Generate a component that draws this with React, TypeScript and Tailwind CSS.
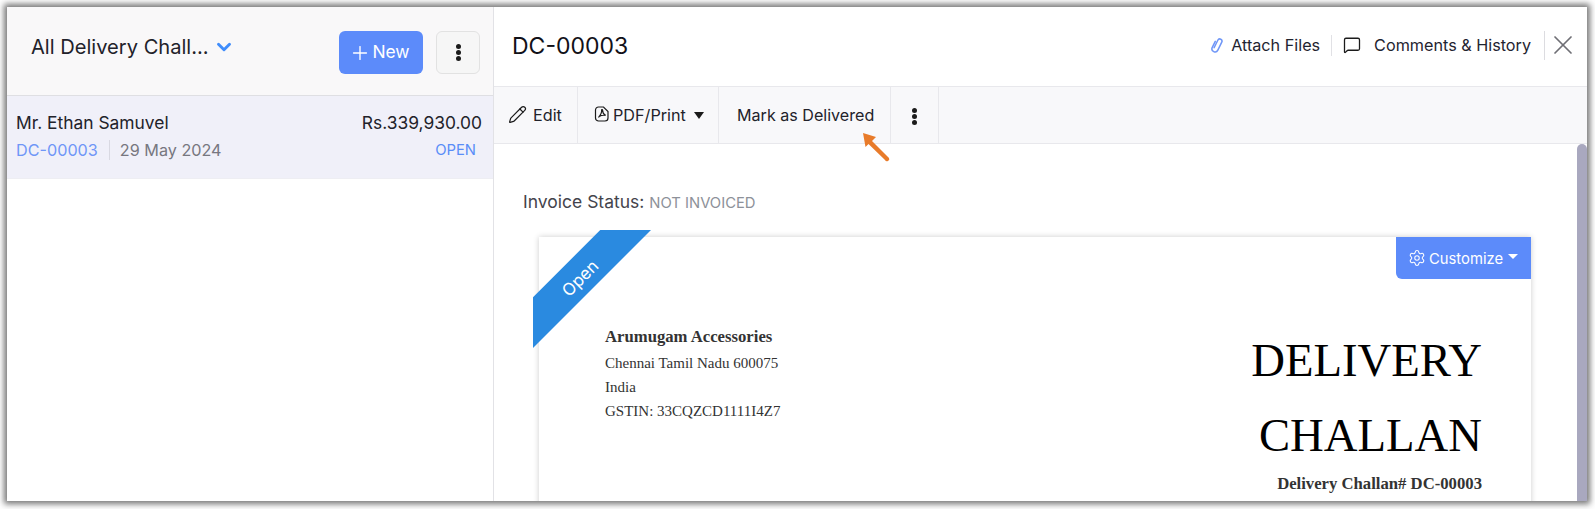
import { Pencil, MessageSquare, X, Settings, Plus, ChevronDown } from 'lucide-react';

function Kebab() {
  return (
    <div className="flex flex-col gap-[1px]">
      <span className="w-[5px] h-[5px] rounded-full bg-[#1b1b1b]" />
      <span className="w-[5px] h-[5px] rounded-full bg-[#1b1b1b]" />
      <span className="w-[5px] h-[5px] rounded-full bg-[#1b1b1b]" />
    </div>
  );
}

function Sidebar() {
  return (
    <aside className="w-[487px] shrink-0 border-r border-[#e2e2e6] flex flex-col">
      <div className="h-[89px] bg-[#f9f8f9] border-b border-[#dfdfe3] flex items-start pt-[24px] pl-[24px] pr-[13px]">
        <div className="flex items-center h-[32px] text-[20.1px] text-[#22222a]">
          <span>All Delivery Chall...</span>
          <ChevronDown className="w-[22px] h-[22px] ml-[4px] text-[#408dfb]" strokeWidth={3.2} />
        </div>
        <button className="ml-auto w-[84px] h-[43px] rounded-[6px] bg-[#5c8bfa] text-white text-[17.4px] flex items-center justify-center gap-[1px] pr-[3px]">
          <Plus className="w-[22px] h-[22px]" strokeWidth={1.5} />
          New
        </button>
        <button className="ml-[13px] w-[44px] h-[43px] rounded-[6px] bg-[#f6f6f6] border border-[#e2e2e2] flex items-center justify-center">
          <Kebab />
        </button>
      </div>
      <div className="h-[83px] bg-[#f0f0f9] border-b border-[#eeeef3] pl-[9px] pr-[11px] pt-[14px]">
        <div className="flex justify-between text-[17.4px] leading-[26px] text-[#22222a]">
          <span>Mr. Ethan Samuvel</span>
          <span>Rs.339,930.00</span>
        </div>
        <div className="flex items-center text-[16.2px] leading-[20px] mt-[4px]">
          <span className="text-[#6f96f7]">DC-00003</span>
          <span className="w-px h-[20px] bg-[#d9d9e2] ml-[11px] mr-[10px]" />
          <span className="text-[#777780]">29 May 2024</span>
          <span className="ml-auto mr-[6px] text-[#5a8df8] text-[14.8px]">OPEN</span>
        </div>
      </div>
    </aside>
  );
}

function TitleBar() {
  return (
    <div className="h-[79px] flex items-start pl-[18px] pr-[8px] pt-[22px]">
      <h1 className="text-[23px] leading-[34px] text-[#111118]">DC-00003</h1>
      <div className="ml-auto flex items-center h-[32px] text-[16.2px] text-[#1f2430]">
        <svg viewBox="0 0 14 17" className="w-[14px] h-[17px] mr-[7px]" fill="none" stroke="#6f96f7" strokeWidth="1.5" strokeLinecap="round">
          <g transform="rotate(26 7 8.5)">
            <path d="M3.6 5.5v6.8a3.1 3.1 0 0 0 6.2 0V3.4a2.2 2.2 0 0 0-4.4 0v8.4" />
          </g>
        </svg>
        <span>Attach Files</span>
        <span className="w-px h-[21px] bg-[#e1e1e5] mx-[11px]" />
        <MessageSquare className="w-[18px] h-[18px] text-[#1b1b1b] mr-[13px]" strokeWidth={1.7} />
        <span>Comments &amp; History</span>
        <span className="w-px h-[29px] bg-[#dcdce0] ml-[13px] mr-[2px]" />
        <X className="w-[32px] h-[32px] text-[#6f6f75]" strokeWidth={1.3} />
      </div>
    </div>
  );
}

function Toolbar() {
  return (
    <div className="relative h-[58px] bg-[#f8f8fa] border-y border-[#e8e8ec] flex text-[16.2px] text-[#22222a]">
      <div className="w-[84px] border-r border-[#e8e8ec] flex items-center pl-[14px] pt-[1px]">
        <Pencil className="w-[19px] h-[19px] text-[#1b1b1b] mr-[6px] -mt-[2px]" strokeWidth={1.5} />
        <span>Edit</span>
      </div>
      <div className="w-[141px] border-r border-[#e8e8ec] flex items-center pl-[16px] pt-[1px]">
        <svg viewBox="0 0 16 16" className="w-[16px] h-[16px] mr-[3px] -mt-[4px]" fill="none" stroke="#1b1b1b" strokeWidth="1.2">
          <path d="M4.5 1h5L14 5.5V12a3 3 0 0 1-3 3H4.5a3 3 0 0 1-3-3V4a3 3 0 0 1 3-3z" />
          <path d="M4.5 11.5C6.5 9 8 6 7.6 4.2c-.2-.8 1-.8 1 0 0 2 1.5 4.4 3 5.2-2-.3-4.5 0-6.4 1z" />
        </svg>
        <span>PDF/Print</span>
        <span className="ml-[8px] w-0 h-0 border-x-[5px] border-x-transparent border-t-[7px] border-t-[#1b1b1b]" />
      </div>
      <div className="w-[172px] border-r border-[#e8e8ec] flex items-center pl-[18px] pt-[1px] text-[16.1px]">Mark as Delivered</div>
      <div className="w-[48px] border-r border-[#e8e8ec] flex items-center justify-center pt-[2px]">
        <Kebab />
      </div>
      <svg viewBox="0 0 30 32" className="absolute left-[367px] top-[44px] w-[30px] h-[32px]" fill="#e87b2a">
        <path d="M2 2 L15 6 L11 10 L28 27 Q29 29 27 30 Q25 31 24 29 L7.5 13 L4.5 16 Z" />
      </svg>
    </div>
  );
}

function Paper() {
  return (
    <div className="relative ml-[16px] mt-[22px] w-[992px] h-[400px] bg-white shadow-[0_0_6px_rgba(0,0,0,0.2)]">
      <div className="absolute -left-[6px] -top-[7px] w-[118px] h-[118px] bg-[#2a8ae0] [clip-path:polygon(57%_0,100%_0,0_100%,0_57%)] flex items-center justify-center">
        <span className="-translate-x-[11px] -translate-y-[10px] -rotate-45 text-white text-[17px]">Open</span>
      </div>
      <div className="absolute right-0 top-0 w-[135px] h-[42px] bg-[#5c8bfa] rounded-bl-[6px] flex items-center pl-[12px] text-white text-[14.8px]">
        <Settings className="w-[18px] h-[18px] mr-[3px] -mt-[1px]" strokeWidth={1.4} />
        <span className="mt-[2px]">Customize</span>
        <span className="ml-[5px] -mt-[3px] w-0 h-0 border-x-[5px] border-x-transparent border-t-[5px] border-t-white" />
      </div>
      <div className="flex justify-between pl-[66px] pr-[49px] pt-[85px] font-['Liberation_Serif',serif]">
        <div className="text-[15px] leading-[24px] text-[#333]">
          <div className="font-bold text-[16.7px] leading-[29px]">Arumugam Accessories</div>
          <div>Chennai Tamil Nadu 600075</div>
          <div>India</div>
          <div>GSTIN: 33CQZCD1111I4Z7</div>
        </div>
        <div className="text-right mt-[1px]">
          <div className="text-[46.7px] leading-[75px] text-black w-[240px] ml-auto">DELIVERY CHALLAN</div>
          <div className="font-bold text-[16.7px] leading-[24px] text-[#333] -mt-[1px]">Delivery Challan# DC-00003</div>
        </div>
      </div>
    </div>
  );
}

export default function App() {
  return (
    <div className="w-[1595px] h-[509px] overflow-hidden bg-white pl-[7px] pt-[7px] pr-[8px] pb-[8px] font-['Inter',sans-serif]">
      <div className="w-full h-full bg-white flex overflow-hidden shadow-[0_0_6px_3px_rgba(60,60,60,0.7)]">
        <Sidebar />
        <main className="flex-1 min-w-0 flex flex-col">
          <TitleBar />
          <Toolbar />
          <div className="relative flex-1 overflow-hidden pl-[29px] pt-[46px]">
            <div className="text-[17.5px] leading-[24px] text-[#44444c]">
              Invoice Status: <span className="text-[14.8px] text-[#8d9199]">NOT INVOICED</span>
            </div>
            <Paper />
            <div className="absolute right-0 top-0 bottom-0 w-[10px] bg-[#a9a8bf] rounded-t-[5px]" />
          </div>
        </main>
      </div>
    </div>
  );
}
